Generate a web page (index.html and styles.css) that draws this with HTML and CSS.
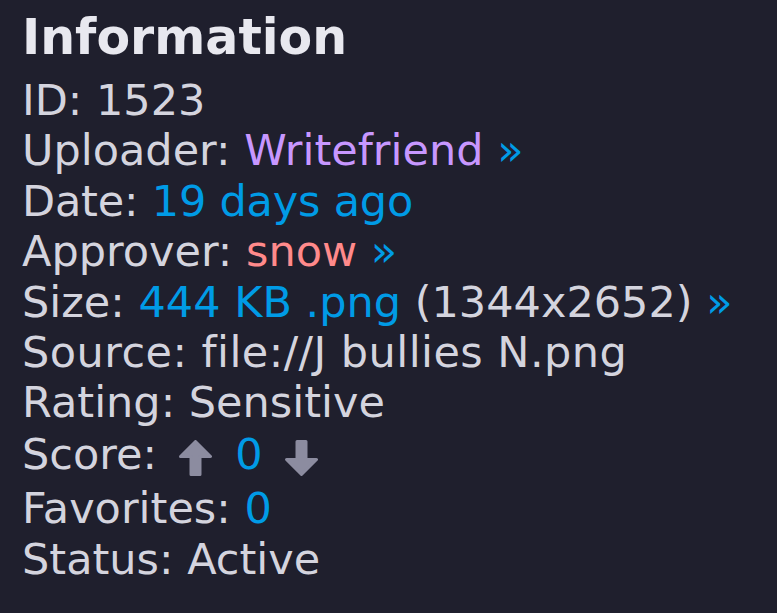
FILE: index.html
```html
<!DOCTYPE html>
<html>
<head>
<meta charset="utf-8">
<link rel="stylesheet" href="styles.css">
</head>
<body>
<section class="info">
  <h2 class="title">Information</h2>
  <ul class="list">
    <li>ID: 1523</li>
    <li>Uploader: <a class="user-purple">Writefriend</a> <a class="link">»</a></li>
    <li class="date">Date: <a class="link">19 days ago</a></li>
    <li>Approver: <a class="user-red">snow</a> <a class="link">»</a></li>
    <li>Size: <a class="link">444 KB .png</a> (1344x2652) <a class="link">»</a></li>
    <li class="source">Source: file://J bullies N.png</li>
    <li>Rating: Sensitive</li>
    <li class="score">Score:&nbsp;<svg class="vote up" viewBox="0 0 33 36" width="33" height="36"><polygon points="16.5,1.5 31.5,16.5 21,16.5 21,34.5 12,34.5 12,16.5 1.5,16.5" /></svg> <a class="link">0</a> <svg class="vote down" viewBox="0 0 33 36" width="33" height="36"><polygon points="16.5,34.5 31.5,19.5 21,19.5 21,1.5 12,1.5 12,19.5 1.5,19.5" /></svg></li>
    <li>Favorites: <a class="link">0</a></li>
    <li>Status: Active</li>
  </ul>
</section>
</body>
</html>
```
FILE: styles.css
```css
html, body {
  margin: 0;
  padding: 0;
  background: #1f1f2d;
}
body {
  font-family: "DejaVu Sans", Verdana, sans-serif;
  color: #d4d4de;
}
.info {
  padding: 8px 0 0 22px;
}
.title {
  margin: 0 0 7px 0;
  font-size: 49px;
  line-height: 60px;
  font-weight: bold;
  color: #e8e8ef;
}
.list {
  list-style: none;
  margin: 0;
  padding: 0;
  font-size: 43px;
  line-height: 50.4px;
}
.list li {
  white-space: nowrap;
}
.source {
  letter-spacing: 0.45px;
}
.date {
  letter-spacing: -0.2px;
}
.link {
  color: #009be6;
}
.user-purple {
  color: #c797ff;
}
.user-red {
  color: #ff8a8b;
}
.score {
  padding: 1px 0 4px 0;
}
.vote {
  vertical-align: -7px;
  fill: #8c8ca0;
  stroke: #8c8ca0;
  stroke-width: 3;
  stroke-linejoin: round;
}
.vote.up {
  margin: 0 10px 0 8px;
}
.vote.down {
  margin-left: 9px;
}
```
